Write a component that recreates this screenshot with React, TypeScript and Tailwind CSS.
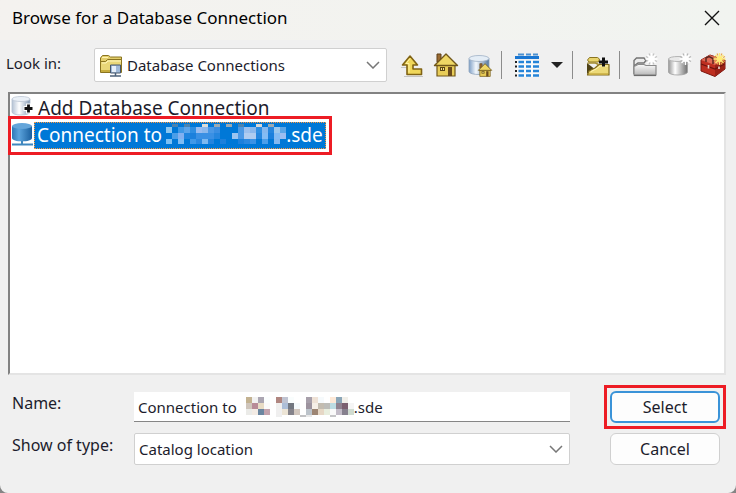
import type { ReactNode } from "react";

type Cell = string;

/* ---------- icons ---------- */

function FolderDbIcon() {
  return (
    <svg viewBox="0 0 24 24" className="h-6 w-6 shrink-0" aria-hidden="true">
      <path d="M1.500 5l2-2.500h6L11.500 4h11v5h-21z" fill="#e3ce6b" stroke="#8a7420" strokeWidth="1" />
      <path d="M3 4.500h6" stroke="#fff3b0" strokeWidth="1" />
      <path d="M1.500 8.500h5l2-2h14v13h-21z" fill="#e9d778" stroke="#8a7420" strokeWidth="1" />
      <path d="M3 10h4l2-2h13" fill="none" stroke="#fff6bd" strokeWidth="1" />
      <path d="M2 18h20" stroke="#c6ab3c" strokeWidth="2" />
      <path d="M11.500 12h10v8h-10z" fill="#9fb9d8" stroke="#46566b" strokeWidth="1" />
      <path d="M13 13h4v6h-4z" fill="#e6effa" />
      <path d="M16.500 20v2.500M11 23h11" stroke="#4d6179" strokeWidth="1.500" />
    </svg>
  );
}

function UpIcon() {
  return (
    <svg viewBox="0 0 26 26" className="h-6.5 w-6.5" aria-hidden="true">
      <path d="M5 24.500h19M2 15.500h6" stroke="#c4c4c4" strokeWidth="1.200" />
      <path d="M11 4L3.500 13H8v9.500h14.500v-5.500H14v-4h4.500z" fill="#f0d75a" stroke="#806314" strokeWidth="1.600" strokeLinejoin="round" />
      <path d="M11 6.500L7 11.500h3v9" fill="none" stroke="#fff2a4" strokeWidth="1" />
    </svg>
  );
}

function House({ transform }: { transform?: string }) {
  return (
    <g transform={transform}>
      <path d="M4 2h4v8H4z" fill="#9a6a32" stroke="#5c3f16" strokeWidth="1" />
      <path d="M4 13h18v11H4z" fill="#e8cc57" stroke="#70571a" strokeWidth="1.200" />
      <path d="M13 2L1.500 13.500h23z" fill="#efd765" stroke="#70571a" strokeWidth="1.400" strokeLinejoin="round" />
      <path d="M7 15h5v4H7z" fill="#5b4515" />
      <path d="M8 16h1v2H8zM10 16h1v2h-1z" fill="#f4e28b" />
      <path d="M15 15h4v9h-4z" fill="#6b4b1c" />
    </g>
  );
}

function HomeIcon() {
  return (
    <svg viewBox="0 0 26 26" className="h-6.5 w-6.5" aria-hidden="true">
      <House />
    </svg>
  );
}

function DbHomeIcon() {
  return (
    <svg viewBox="0 0 26 26" className="h-6.5 w-6.5" aria-hidden="true">
      <defs>
        <linearGradient id="dbHome" x1="0" x2="1">
          <stop offset="0" stopColor="#7f9fc6" />
          <stop offset=".35" stopColor="#f3f8fd" />
          <stop offset="1" stopColor="#54789f" />
        </linearGradient>
      </defs>
      <path d="M2 6.500v13C2 23.500 22 23.500 22 19.500v-13z" fill="url(#dbHome)" stroke="#8fa4bd" strokeWidth=".8" />
      <ellipse cx="12" cy="6.500" rx="10" ry="3" fill="#e4edf6" stroke="#a0b1c6" strokeWidth=".8" />
      <House transform="translate(10.500 10.500) scale(.58)" />
    </svg>
  );
}

function DetailsIcon() {
  const rows = [10, 14.5, 19, 23.5];
  return (
    <svg viewBox="0 0 26 26" className="h-6.5 w-6.5" aria-hidden="true">
      <path d="M2 8h23v17H2z" fill="#fafafa" />
      <path d="M4 2.500h6M12 2.500h5M19 2.500h5" stroke="#4a8fd0" strokeWidth="2" />
      <path d="M1 5.500h24" stroke="#1976d2" strokeWidth="3" />
      {rows.map((y) => (
        <g key={y}>
          <path d={`M1 ${y}h2`} stroke="#222" strokeWidth="2" />
          <path d={`M4.500 ${y}h5.500M12 ${y}h5M19 ${y}h6`} stroke="#2584d8" strokeWidth="2.500" />
        </g>
      ))}
    </svg>
  );
}

function ConnectFolderIcon() {
  return (
    <svg viewBox="0 0 26 26" className="h-6.5 w-6.5" aria-hidden="true">
      <path d="M2.500 8l2-2.500h8l2 1.500-1 3H4z" fill="#e8d36c" stroke="#8a7420" />
      <path d="M2 11v11l7-5.500z" fill="#4e4217" />
      <path d="M2.500 23l1.500-4 6-3 4-3.500h10V23z" fill="#ecd977" stroke="#806a1c" strokeWidth="1.200" strokeLinejoin="round" />
      <path d="M2.500 11h8l3 1.500" fill="none" stroke="#a58d31" strokeWidth="1.500" />
      <path d="M6 19.500l5-2.500 4-3h8" fill="none" stroke="#fff4b5" />
      <path d="M4 22h19" stroke="#c9ad42" strokeWidth="1.500" />
      <path d="M18.500 5.500v9M14 10h9" stroke="#111" strokeWidth="3" />
    </svg>
  );
}

function Spark({ color, edge }: { color: string; edge: string }) {
  return (
    <g>
      <path d="M17 1.500l1 2M22 1.500l-1 2M14 4.500l2 1M25 4.500l-2 1M14 9.500l2-1M25 9.500l-2-1M17 12.500l1-2M22 12.500l-1-2" stroke={edge} strokeWidth="1.200" />
      <path d="M19.500 1v12M13.500 7h12M15.500 3l8 8M23.500 3l-8 8" stroke={color} strokeWidth="1.400" />
      <circle cx="19.500" cy="7" r="3" fill={color} />
    </g>
  );
}

function NewFolderIcon() {
  return (
    <svg viewBox="0 0 26 26" className="h-6.5 w-6.5" aria-hidden="true">
      <defs>
        <linearGradient id="newFolder" x1="0" y1="0" x2="0" y2="1">
          <stop offset="0" stopColor="#fafafa" />
          <stop offset="1" stopColor="#b9b9b9" />
        </linearGradient>
      </defs>
      <path d="M2 22V8.500L4.500 6H12l2 2.500-2 2.500H6l-4 3" fill="#ececec" stroke="#747474" strokeWidth="1.400" />
      <path d="M2 23v-8.500l4-2h6l2 1h10V23z" fill="url(#newFolder)" stroke="#8b8b8b" strokeWidth="1.200" />
      <path d="M2 23.500h22" stroke="#6c6c6c" strokeWidth="1.200" />
      <Spark color="#fff" edge="#c2c2c2" />
    </svg>
  );
}

function NewDbIcon() {
  return (
    <svg viewBox="0 0 26 26" className="h-6.5 w-6.5" aria-hidden="true">
      <defs>
        <linearGradient id="newDb" x1="0" x2="1">
          <stop offset="0" stopColor="#979797" />
          <stop offset=".35" stopColor="#fff" />
          <stop offset="1" stopColor="#707070" />
        </linearGradient>
      </defs>
      <path d="M2.500 7v13c0 4 19 4 19 0V7z" fill="url(#newDb)" stroke="#a0a0a0" strokeWidth=".8" />
      <ellipse cx="12" cy="7" rx="9.500" ry="2.500" fill="#e9e9e9" stroke="#b5b5b5" />
      <Spark color="#fff" edge="#b5b5b5" />
    </svg>
  );
}

function ToolboxIcon() {
  return (
    <svg viewBox="0 0 26 26" className="h-6.5 w-6.5" aria-hidden="true">
      <path d="M1 8l9-5 15 5v9l-10 7.500L1 19z" fill="#bd2e20" stroke="#7d1710" />
      <path d="M1 8l9-5 14 5-9 5z" fill="#df6a56" />
      <path d="M15 13l9.500-5v9L15 24z" fill="#9b2117" />
      <path d="M1 12l14 5 9.500-5" fill="none" stroke="#6d130d" strokeWidth="1.200" />
      <path d="M6 10V6l3-1.500 4 2V12" fill="none" stroke="#5c2620" strokeWidth="1.500" />
      <path d="M8.500 13v3.500M19 14.500V17" stroke="#f1d9d3" strokeWidth="1.600" />
      <Spark color="#ffec78" edge="#e8a54e" />
    </svg>
  );
}

function AddDbIcon() {
  return (
    <svg viewBox="0 0 24 26" className="h-6.5 w-6 shrink-0" aria-hidden="true">
      <defs>
        <linearGradient id="addDb" x1="0" x2="1">
          <stop offset="0" stopColor="#b4c2d4" />
          <stop offset=".4" stopColor="#fff" />
          <stop offset="1" stopColor="#8097b2" />
        </linearGradient>
      </defs>
      <path d="M2 4v13c0 4 18 4 18 0V4z" fill="url(#addDb)" stroke="#b4c0cf" strokeWidth=".8" />
      <ellipse cx="11" cy="4" rx="9" ry="2.500" fill="#eaf0f7" stroke="#bcc7d4" strokeWidth=".8" />
      <path d="M1 22.500h13" stroke="#93a5ba" strokeWidth="1.500" />
      <path d="M18.500 8.500v10M13.500 13.500h10" stroke="#fff" strokeWidth="5" />
      <path d="M18.500 9.500v8M14.500 13.500h8" stroke="#111" strokeWidth="2.800" />
    </svg>
  );
}

function BlueDbIcon() {
  return (
    <svg viewBox="0 0 24 26" className="h-6.5 w-6 shrink-0" aria-hidden="true">
      <defs>
        <linearGradient id="blueDb" x1="0" x2="1">
          <stop offset="0" stopColor="#2f78b8" />
          <stop offset=".35" stopColor="#5ba3dc" />
          <stop offset="1" stopColor="#1a5f9e" />
        </linearGradient>
      </defs>
      <path d="M2 4v12c0 4.500 20 4.500 20 0V4z" fill="url(#blueDb)" />
      <ellipse cx="12" cy="4" rx="10" ry="3" fill="#64a5da" />
      <path d="M12 19v3M2 22.500h21" stroke="#3f87bf" strokeWidth="2" />
    </svg>
  );
}

function Chevron() {
  return (
    <svg viewBox="0 0 14 8" className="pointer-events-none absolute right-1.5 h-2 w-3.5" aria-hidden="true">
      <path d="M1 1l6 6 6-6" fill="none" stroke="#777" strokeWidth="1.500" />
    </svg>
  );
}

/* ---------- pixelated server names ---------- */

const listMosaic: Cell[][] = [
  ["", "#4b83b0", "", "#4b83b0", "", "", "#dcdcd8", "", "#9aaab4", "", "#9aaab4", "", "#4b83b0", "", "", "#dcd8d6", "", "#9aaab4", "", ""],
  ["#8cc6f0", "", "#3f98e6", "#5ba4ea", "#2e8ee2", "#9abcf0", "#8cb8ec", "#4a98e6", "#3a8ee2", "", "", "", "#4a98e4", "#9cc0ee", "#8cb8ec", "#2e8ee2", "#86b8ee", "#2686de", "#9cc8ee", "#5ca5e6"],
  ["", "#4a9ee8", "#82b0f0", "#2084de", "#1c80dc", "#3a90e4", "#3a90e4", "#3a90e4", "#2686de", "", "", "#9cc4f0", "#4a98e6", "#b0ccf0", "#b0ccf0", "#2686de", "#84bcf4", "#1c80dc", "#84bcf4", "#9cbcf0"],
  ["#7cc0f4", "", "#7cbcf4", "", "#3f98e8", "#2a88e0", "#7cb8f0", "#2484de", "", "#1c80dc", "", "", "#1c80dc", "#2a88e0", "#3a92e6", "", "#4a9eea", "", "#84b8f0", ""],
];

const nameMosaic: Cell[][] = [
  ["#c3b291", "#f1f1f1", "#aba6b2", "#fbfefe", "", "#b08680", "#c0c4d2", "#f9fdfd", "", "", "#a79faa", "#efe2d6", "#f6fafc", "", "#fde9d8", "#8aa5b7", "#f1efe9", ""],
  ["#cfc5bb", "#b88b98", "#e8dcc5", "#fbfbfb", "", "#f0efee", "#adbed7", "#727780", "#f5fafc", "", "#9d939e", "#f6efe7", "#c3bcb0", "#bdbdb9", "#bcdce3", "#8f8290", "#7b6070", "#f5f5f5"],
  ["#ebebe8", "#f3ebe4", "#6b86a0", "#c3a3ad", "", "#f0efef", "#ece4d5", "#85838a", "#d3c8bf", "", "#bcc3ca", "#9d8573", "#e6d7c5", "#e8eede", "#fafafa", "#c3bcc8", "#86808e", "#cfdbd0"],
  ["", "", "", "", "", "#efefef", "", "", "", "#c2c2c4", "#e8e8e8", "", "", "", "#c6c6c8", "", "", ""],
];

// top is how much of the first row of cells is cut off
function Mosaic({ cells, top = 0, className }: { cells: Cell[][]; top?: number; className: string }) {
  return (
    <svg viewBox={`0 ${top} ${cells[0].length} 3.333`} preserveAspectRatio="none" shapeRendering="crispEdges" className={className} aria-hidden="true">
      {cells.map((row, y) => row.map((fill, x) => fill && <rect key={`${x}-${y}`} x={x} y={y} width="1" height="1" fill={fill} />))}
    </svg>
  );
}

/* ---------- toolbar ---------- */

function ToolButton({ label, children }: { label: string; children: ReactNode }) {
  return (
    <button type="button" aria-label={label} className="flex h-7 shrink-0 items-center">
      {children}
    </button>
  );
}

function Separator() {
  return <span className="mr-1 h-7 w-px shrink-0 bg-[#8c8c8c]" />;
}

export default function App() {
  return (
    <div className="bg-[#858585]">
      <main className="flex min-h-screen flex-col overflow-hidden rounded-b-lg bg-[#f0f0f0] font-['Noto_Sans','Open_Sans',sans-serif] text-[15px] text-[#1c1c2c]">
        <header className="flex h-10 items-center justify-between bg-linear-to-r from-[#f4f2ef] to-[#f1f4f0] pr-4 pb-1 pl-3 text-black">
          <h1 className="text-[17px] leading-6">Browse for a Database Connection</h1>
          <button type="button" aria-label="Close">
            <svg viewBox="0 0 16 16" className="h-4 w-4" aria-hidden="true">
              <path d="M1 1l14 14M15 1L1 15" stroke="#111" strokeWidth="1.400" />
            </svg>
          </button>
        </header>

        <div className="flex items-center pt-2 pr-2.5 pb-2.5 pl-1.5">
          <label htmlFor="look-in" className="w-22 shrink-0 pb-1">Look in:</label>
          <div className="relative flex h-8.5 flex-1 items-center rounded-xs border border-[#d0d0d0] bg-white pl-1">
            <FolderDbIcon />
            <select id="look-in" className="h-full w-full appearance-none bg-transparent pl-1 outline-none">
              <option>Database Connections</option>
            </select>
            <Chevron />
          </div>
          <div className="ml-3 flex shrink-0 items-center gap-2">
            <ToolButton label="Up One Level"><UpIcon /></ToolButton>
            <ToolButton label="Go To Home Folder"><HomeIcon /></ToolButton>
            <ToolButton label="Go To Default Geodatabase"><DbHomeIcon /></ToolButton>
            <Separator />
            <div className="flex items-center gap-2.5">
              <ToolButton label="Details"><DetailsIcon /></ToolButton>
              <ToolButton label="View options">
                <svg viewBox="0 0 14 8" className="h-2 w-3.5" aria-hidden="true">
                  <path d="M1 1h12L7 7z" fill="#222" />
                </svg>
              </ToolButton>
            </div>
            <Separator />
            <ToolButton label="Connect To Folder"><ConnectFolderIcon /></ToolButton>
            <Separator />
            <ToolButton label="New Folder"><NewFolderIcon /></ToolButton>
            <ToolButton label="New File Geodatabase"><NewDbIcon /></ToolButton>
            <ToolButton label="New Toolbox"><ToolboxIcon /></ToolButton>
          </div>
        </div>

        <ul className="mr-2.5 ml-2 flex-1 border-2 border-t-[#828282] border-r-[#e4e4e4] border-b-[#e4e4e4] border-l-[#828282] bg-white pt-px text-[19px] leading-[27px]">
          <li>
            <button type="button" className="flex">
              <AddDbIcon />
              <span className="px-1">Add Database Connection</span>
            </button>
          </li>
          <li className="relative w-fit">
            <button type="button" aria-pressed="true" className="flex">
              <BlueDbIcon />
              <span className="flex items-center border border-dotted border-[#ff9a3c] bg-[#0078d7] px-0.5 leading-[25px] text-white">
                Connection to
                <Mosaic cells={listMosaic} top={0.5} className="mb-1 ml-1 h-5 w-30" />
                .sde
              </span>
            </button>
            <span className="pointer-events-none absolute -top-1.5 -right-1.5 -bottom-1.5 -left-0.5 border-3 border-[#ed1c24]" />
          </li>
        </ul>

        <form className="grid grid-cols-[auto_1fr_auto] items-center gap-y-2.5 pt-4 pr-4 pb-7 pl-3" onSubmit={(e) => e.preventDefault()}>
          <label htmlFor="name" className="w-30 pb-2 text-base">Name:</label>
          <div className="relative mr-10 ml-0.5 flex items-center">
            <input id="name" defaultValue={`Connection to${"\u00a0".repeat(30)}.sde`} className="h-7.5 w-full border-b border-[#868686] bg-white px-1 outline-none" />
            <Mosaic cells={nameMosaic} className="pointer-events-none absolute left-28 h-5 w-27" />
          </div>
          <div className="relative">
            <button type="submit" className="h-8 w-27.5 rounded-md border-2 border-[#3a93d8] bg-[#fdfdfd] text-base">Select</button>
            <span className="pointer-events-none absolute -inset-1.5 border-3 border-[#ed1c24]" />
          </div>
          <label htmlFor="type" className="pb-2 text-base">Show of type:</label>
          <div className="relative mr-10 ml-0.5 flex h-8 items-center rounded-xs border border-[#d0d0d0] bg-white">
            <select id="type" className="h-full w-full appearance-none bg-transparent px-1 outline-none">
              <option>Catalog location</option>
            </select>
            <Chevron />
          </div>
          <button type="button" className="h-8 w-27.5 rounded-md border border-[#d0d0d0] bg-[#fdfdfd] text-base">Cancel</button>
        </form>
      </main>
    </div>
  );
}
